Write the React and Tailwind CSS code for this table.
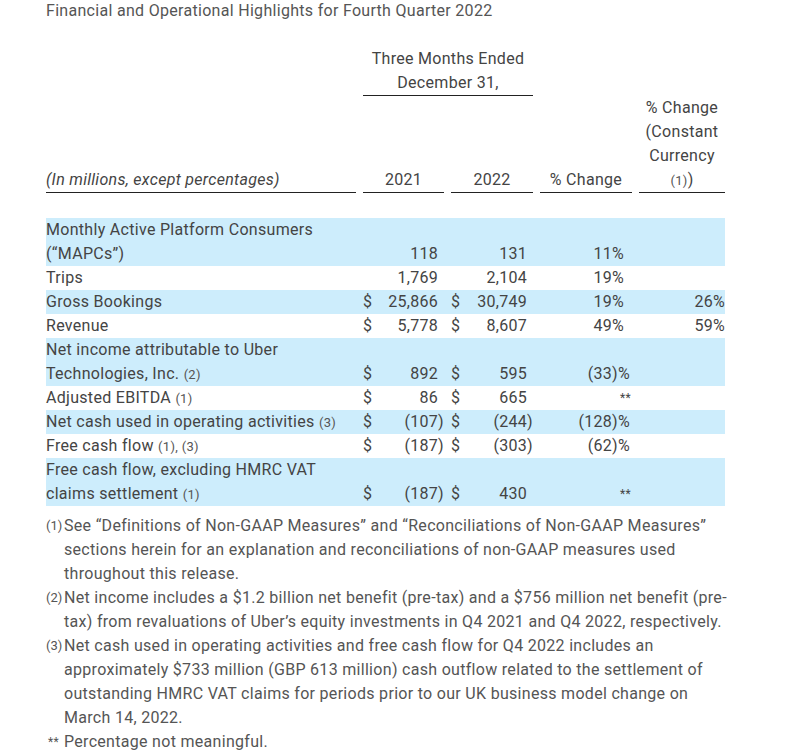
const rows = [
  { label: ["Monthly Active Platform Consumers", "(“MAPCs”)"], a: "118", b: "131", c: "11%", blue: true },
  { label: ["Trips"], a: "1,769", b: "2,104", c: "19%" },
  { label: ["Gross Bookings"], a: "25,866", b: "30,749", c: "19%", d: "26%", dollar: true, blue: true },
  { label: ["Revenue"], a: "5,778", b: "8,607", c: "49%", d: "59%", dollar: true },
  { label: ["Net income attributable to Uber", "Technologies, Inc."], note: "(2)", a: "892", b: "595", c: "(33)%", dollar: true, blue: true },
  { label: ["Adjusted EBITDA"], note: "(1)", a: "86", b: "665", c: "**", dollar: true },
  { label: ["Net cash used in operating activities"], note: "(3)", a: "(107)", b: "(244)", c: "(128)%", dollar: true, blue: true },
  { label: ["Free cash flow"], note: "(1), (3)", a: "(187)", b: "(303)", c: "(62)%", dollar: true },
  { label: ["Free cash flow, excluding HMRC VAT", "claims settlement"], note: "(1)", a: "(187)", b: "430", c: "**", dollar: true, blue: true },
];

const cols = "grid grid-cols-[310px_81px_82px_92px_86px] gap-x-[7px]";

const Num = ({ v, dollar }) => {
  const neg = v.startsWith("(");
  return (
    <div className="flex justify-between">
      <span>{dollar ? "$" : ""}</span>
      <span>
        {v}
        {!neg && <span className="invisible">)</span>}
      </span>
    </div>
  );
};

const Pct = ({ v }) => {
  if (v === "**") return <div className="text-right pr-[1px] text-[12px]">**</div>;
  const neg = v.startsWith("(");
  return (
    <div className="text-right pr-[2px]">
      {v}
      {!neg && <span className="invisible">)</span>}
    </div>
  );
};

const Note = ({ children }) => (
  <span className="text-[13px] leading-none text-[#555]">{children}</span>
);

const App = () => {
  return (
    <div className="w-[799px] h-[750px] bg-white overflow-hidden text-[#444] font-['Roboto',sans-serif] text-[16px] leading-[24px] tracking-[0.3px]">
      <div className="pl-[46px] w-[725px]">
        <h1 className="leading-[22px] text-[#555]">
          Financial and Operational Highlights for Fourth Quarter 2022
        </h1>

        {/* ====> column headers */}
        <div className={`${cols} mt-[25px]`}>
          <div />
          <div className="col-span-2 text-center border-b border-[#222]">
            Three Months Ended
            <br />
            December 31,
          </div>
          <div />
          <div />
        </div>
        <div className={`${cols} items-end`}>
          <div className="italic border-b border-[#222]">(In millions, except percentages)</div>
          <div className="text-center border-b border-[#222]">2021</div>
          <div className="text-center border-b border-[#222]">2022</div>
          <div className="text-center border-b border-[#222]">% Change</div>
          <div className="text-center border-b border-[#222]">
            % Change
            <br />
            (Constant
            <br />
            Currency
            <br />
            <Note>(1)</Note>)
          </div>
        </div>

        {/* ====> body rows */}
        <div className="mt-[25px]">
          {rows.map((r, i) => (
            <div key={i} className={`${cols} items-end ${r.blue ? "bg-[#cdedfc]" : ""}`}>
              <div>
                {r.label.map((l, j) => (
                  <div key={j}>
                    {l}
                    {j === r.label.length - 1 && r.note && (
                      <>
                        {" "}
                        <Note>{r.note}</Note>
                      </>
                    )}
                  </div>
                ))}
              </div>
              <Num v={r.a} dollar={r.dollar} />
              <Num v={r.b} dollar={r.dollar} />
              <Pct v={r.c} />
              <div className="text-right">{r.d}</div>
            </div>
          ))}
        </div>

        {/* ====> footnotes */}
        <div className="mt-[8px] text-[#555] whitespace-nowrap">
          <div className="flex">
            <span className="w-[18px] shrink-0 text-[13px] tracking-normal">(1)</span>
            <div>
              See “Definitions of Non-GAAP Measures” and “Reconciliations of Non-GAAP Measures”
              <br />
              sections herein for an explanation and reconciliations of non-GAAP measures used
              <br />
              throughout this release.
            </div>
          </div>
          <div className="flex">
            <span className="w-[18px] shrink-0 text-[13px] tracking-normal">(2)</span>
            <div>
              Net income includes a $1.2 billion net benefit (pre-tax) and a $756 million net benefit (pre-
              <br />
              tax) from revaluations of Uber’s equity investments in Q4 2021 and Q4 2022, respectively.
            </div>
          </div>
          <div className="flex">
            <span className="w-[18px] shrink-0 text-[13px] tracking-normal">(3)</span>
            <div>
              Net cash used in operating activities and free cash flow for Q4 2022 includes an
              <br />
              approximately $733 million (GBP 613 million) cash outflow related to the settlement of
              <br />
              outstanding HMRC VAT claims for periods prior to our UK business model change on
              <br />
              March 14, 2022.
            </div>
          </div>
          <div className="flex">
            <span className="w-[18px] shrink-0 text-[12px] pl-[2px]">**</span>
            <div>Percentage not meaningful.</div>
          </div>
        </div>
      </div>
    </div>
  );
};

export default App;
